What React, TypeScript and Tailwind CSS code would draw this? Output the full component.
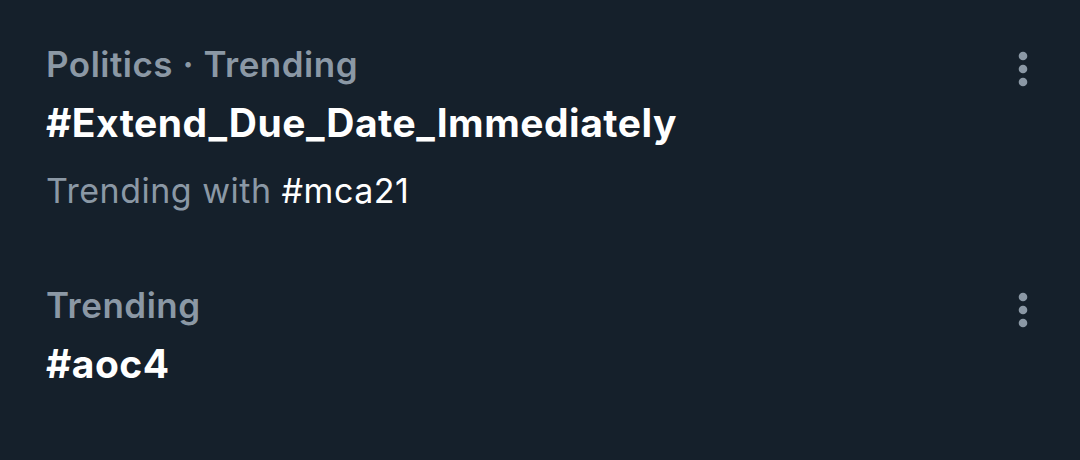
const items = [
  {
    meta: 'Politics · Trending',
    tag: '#Extend_Due_Date_Immediately',
    sub: '#mca21',
  },
  {
    meta: 'Trending',
    tag: '#aoc4',
    sub: null as string | null,
  },
];

function MoreDots() {
  return (
    <svg width="10" height="36" viewBox="0 0 10 36" className="text-[#8b98a5]">
      <circle cx="5" cy="5" r="4.3" fill="currentColor" />
      <circle cx="5" cy="18" r="4.3" fill="currentColor" />
      <circle cx="5" cy="31" r="4.3" fill="currentColor" />
    </svg>
  );
}

export default function App() {
  return (
    <div
      className="w-[1080px] h-[460px] bg-[#15202b] pt-[40px]"
      style={{ fontFamily: 'Inter, "Noto Sans", sans-serif' }}
    >
      {items.map((item, i) => (
        <div key={i} className={`flex pl-[46px] pr-[52px] ${i > 0 ? 'mt-[68px]' : ''}`}>
          <div className="flex-1 flex flex-col tracking-[0.5px]">
            <div className="text-[35px] leading-[48px] font-semibold text-[#8b98a5]">{item.meta}</div>
            <div className="mt-[9px] text-[39px] leading-[52px] font-bold text-white">{item.tag}</div>
            {item.sub && (
              <div className="mt-[20px] text-[34px] leading-[44px] text-[#8b98a5]">
                Trending with <span className="text-white">{item.sub}</span>
              </div>
            )}
          </div>
          <div className="pt-[11px]">
            <MoreDots />
          </div>
        </div>
      ))}
    </div>
  );
}
